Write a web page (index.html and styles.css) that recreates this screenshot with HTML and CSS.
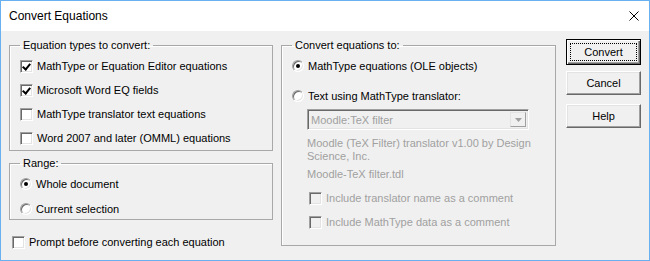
FILE: index.html
```html
<!DOCTYPE html>
<html lang="en">
  <head>
    <meta charset="UTF-8" />
    <title>Convert Equations</title>
    <link rel="stylesheet" href="styles.css">
  </head>
  <body>
    <div class="window">
      <div class="titlebar">
        <span class="title">Convert Equations</span>
        <svg class="close" width="10" height="10" viewBox="0 0 10 10">
          <path d="M0.5 0.5 L9.5 9.5 M9.5 0.5 L0.5 9.5" stroke="#000" stroke-width="1" />
        </svg>
      </div>

      <div class="content">
        <div class="col-left">
          <fieldset class="group types">
            <legend>Equation types to convert:</legend>
            <label class="row"><span class="check on"></span>MathType or Equation Editor equations</label>
            <label class="row"><span class="check on"></span>Microsoft Word EQ fields</label>
            <label class="row"><span class="check"></span>MathType translator text equations</label>
            <label class="row"><span class="check"></span>Word 2007 and later (OMML) equations</label>
          </fieldset>

          <fieldset class="group range">
            <legend>Range:</legend>
            <label class="row"><span class="radio on"></span>Whole document</label>
            <label class="row"><span class="radio"></span>Current selection</label>
          </fieldset>

          <label class="row prompt"><span class="check"></span>Prompt before converting each equation</label>
        </div>

        <fieldset class="group target">
          <legend>Convert equations to:</legend>
          <label class="row"><span class="radio on"></span>MathType equations (OLE objects)</label>
          <label class="row second"><span class="radio"></span>Text using MathType translator:</label>

          <div class="sub">
            <div class="combo">
              <span class="combo-text">Moodle:TeX filter</span>
              <span class="combo-btn">
                <svg width="7" height="4" viewBox="0 0 7 4"><path d="M0 0 H7 L3.5 4 Z" fill="#a0a0a0" /></svg>
              </span>
            </div>
            <p class="desc">Moodle (TeX Filter) translator v1.00 by Design Science, Inc.</p>
            <p class="file">Moodle-TeX filter.tdl</p>
            <label class="row sub-check"><span class="check off"></span>Include translator name as a comment</label>
            <label class="row sub-check"><span class="check off"></span>Include MathType data as a comment</label>
          </div>
        </fieldset>

        <div class="buttons">
          <button class="btn default"><span class="focus">Convert</span></button>
          <button class="btn cancel">Cancel</button>
          <button class="btn help">Help</button>
        </div>
      </div>
    </div>
  </body>
</html>
```

FILE: styles.css
```css
html,
body {
  margin: 0;
  padding: 0;
  background: #fff;
}

body {
  font-family: "Liberation Sans", Arial, sans-serif;
  font-size: 11px;
  color: #000;
}

.window {
  width: 650px;
  height: 261px;
  box-sizing: border-box;
  border: 1px solid #68b0f0;
  background: #f0f0f0;
  display: flex;
  flex-direction: column;
}

.titlebar {
  height: 30px;
  background: #fff;
  display: flex;
  align-items: center;
  justify-content: space-between;
  padding: 0 10px 0 8px;
}

.title {
  font-size: 12px;
}

.close {
  display: block;
}

.content {
  display: flex;
  align-items: flex-start;
  padding: 8px 0 0 8px;
}

.col-left {
  width: 264px;
  display: flex;
  flex-direction: column;
}

.group {
  margin: 0;
  padding: 0 0 0 10px;
  border: 1px solid #a8a8a8;
  box-shadow: inset 1px 1px 0 #fff;
  min-width: 0;
}

.group legend {
  padding: 0 3px;
  margin-left: 0;
  line-height: 13px;
}

.row {
  display: flex;
  align-items: center;
  height: 20px;
  white-space: nowrap;
}

.types {
  display: flex;
  flex-direction: column;
  gap: 4px;
  padding-top: 4px;
  padding-bottom: 2px;
}

.range {
  margin-top: 6px;
  display: flex;
  flex-direction: column;
  gap: 5px;
  padding-top: 4px;
}

.prompt {
  margin: 12px 0 0 3px;
}

/* classic checkbox */
.check {
  width: 13px;
  height: 13px;
  box-sizing: border-box;
  margin-right: 4px;
  border: 1px solid;
  border-color: #a0a0a0 #fff #fff #a0a0a0;
  box-shadow: inset 1px 1px 0 #696969, inset -1px -1px 0 #e3e3e3;
  background: #fff;
  flex: none;
  position: relative;
}

.check.on::after {
  content: "";
  position: absolute;
  left: 3px;
  top: 1px;
  width: 3px;
  height: 6px;
  border: solid #000;
  border-width: 0 2px 2px 0;
  transform: rotate(40deg);
}

.check.off {
  background: #f0f0f0;
}

/* classic radio */
.radio {
  width: 12px;
  height: 12px;
  box-sizing: border-box;
  margin-right: 4px;
  border-radius: 50%;
  border: 1px solid;
  border-color: #a0a0a0 #fff #fff #a0a0a0;
  box-shadow: inset 1px 1px 0 #696969, inset -1px -1px 0 #e3e3e3;
  background: #fff;
  flex: none;
  position: relative;
}

.radio.on::after {
  content: "";
  position: absolute;
  left: 3px;
  top: 3px;
  width: 4px;
  height: 4px;
  border-radius: 50%;
  background: #000;
}

.target {
  width: 275px;
  box-sizing: border-box;
  margin-left: 8px;
  padding-top: 4px;
  padding-bottom: 13px;
}

.target .second {
  margin-top: 10px;
}

.sub {
  padding-left: 15px;
  color: #a0a0a0;
}

.combo {
  margin-top: 3px;
  width: 222px;
  height: 21px;
  box-sizing: border-box;
  border: 1px solid;
  border-color: #a0a0a0 #fff #fff #a0a0a0;
  box-shadow: inset 1px 1px 0 #696969, inset -1px -1px 0 #e3e3e3;
  background: #f0f0f0;
  display: flex;
  align-items: center;
  justify-content: space-between;
  padding: 2px;
}

.combo-text {
  padding-left: 1px;
}

.combo-btn {
  width: 16px;
  height: 15px;
  box-sizing: border-box;
  border: 1px solid;
  border-color: #e3e3e3 #a0a0a0 #a0a0a0 #e3e3e3;
  display: flex;
  align-items: center;
  justify-content: center;
}

.combo-btn svg {
  display: block;
}

.desc,
.file {
  margin: 0;
  line-height: 13px;
  width: 228px;
}

.desc {
  margin-top: 7px;
}

.file {
  margin-top: 5px;
}

.sub-check {
  margin-left: 2px;
}

.sub-check:first-of-type {
  margin-top: 7px;
}

.sub-check + .sub-check {
  margin-top: 4px;
}

.buttons {
  margin-left: 10px;
  display: flex;
  flex-direction: column;
  width: 76px;
}

.btn {
  font-family: inherit;
  font-size: 11px;
  color: #000;
  width: 75px;
  height: 24px;
  padding: 0;
  background: #f0f0f0;
  border: 1px solid;
  border-color: #fff #696969 #696969 #fff;
  box-shadow: inset -1px -1px 0 #a0a0a0, inset 1px 1px 0 #e3e3e3;
  display: flex;
  align-items: center;
  justify-content: center;
}

.btn.default {
  height: 26px;
  border: 1px solid #000;
  box-shadow: inset 1px 1px 0 #fff, inset -1px -1px 0 #696969, inset -2px -2px 0 #a0a0a0;
  padding: 3px;
}

.focus {
  flex: 1;
  align-self: stretch;
  display: flex;
  align-items: center;
  justify-content: center;
  border: 1px dotted #000;
}

.cancel {
  margin-top: 6px;
}

.help {
  margin-top: 9px;
}
```
